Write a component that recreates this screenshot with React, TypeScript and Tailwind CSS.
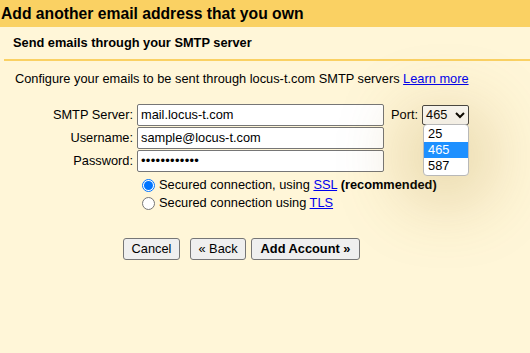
const fontStack = "font-['Liberation_Sans',Arial,sans-serif]";

function Field({ label, value, password }: { label: string; value: string; password?: boolean }) {
  return (
    <div className="flex h-[23px] items-center">
      <label className="w-[134px] pr-[1px] text-right">{label}</label>
      <div className="ml-[3px] flex h-[22px] w-[247px] items-center rounded-[2px] border border-[#767676] bg-white px-[3px]">
        {password ? <span className="text-[13px] tracking-[0.3px]">{value}</span> : <span>{value}</span>}
      </div>
    </div>
  );
}

function Radio({ checked }: { checked?: boolean }) {
  return (
    <span
      className={`flex h-[13px] w-[13px] items-center justify-center rounded-full border ${checked ? "border-[#0075ff]" : "border-[#767676]"} bg-white`}
    >
      {checked && <span className="h-[9px] w-[9px] rounded-full bg-[#0075ff]" />}
    </span>
  );
}

function Btn({ children, bold, w }: { children: React.ReactNode; bold?: boolean; w: string }) {
  return (
    <button
      className={`flex h-[22px] ${w} items-center justify-center rounded-[3px] border border-[#767676] bg-[#efefef] text-[12.8px] text-black ${bold ? "font-bold" : ""}`}
    >
      {children}
    </button>
  );
}

export default function App() {
  return (
    <div className={`h-[353px] w-[530px] overflow-hidden bg-[#fff6d8] text-[12.8px] text-black ${fontStack}`}>
      <div className="flex h-[27px] items-center bg-[#fad163] pl-[1px] text-[15.7px] font-bold">
        Add another email address that you own
      </div>
      <div className="flex h-[32px] items-center pl-[13px] font-bold">
        Send emails through your SMTP server
      </div>
      <div className="ml-[4px] h-[2px] bg-[#fad163]" />

      <div className="pt-[10px]">
        <p className="pl-[15px] leading-[15px]">
          Configure your emails to be sent through locus-t.com SMTP servers{" "}
          <a className="text-[#0000ee] underline" href="#">
            Learn more
          </a>
        </p>

        <div className="mt-[17px] flex">
          <div className="flex flex-col">
            <Field label="SMTP Server:" value="mail.locus-t.com" />
            <Field label="Username:" value="sample@locus-t.com" />
            <Field label="Password:" value="••••••••••••" password />
          </div>
          <div className="ml-[7px] flex h-[23px] items-center">
            <span>Port:</span>
            <div className="relative ml-[4px]">
              <div className="flex h-[20px] w-[47px] items-center justify-between rounded-[2px] border border-[#444] bg-white pl-[3px] pr-[3px]">
                <span>465</span>
                <svg width="10" height="8" viewBox="0 0 10 8">
                  <path d="M1 2l4 4 4-4" fill="none" stroke="#000" strokeWidth="2" />
                </svg>
              </div>
              <div className="absolute left-[1px] top-[19px] z-10 w-[46px] overflow-hidden rounded-[4px] border border-[#b8b8b8] bg-white py-[1px] shadow-[0_6px_70px_16px_rgba(150,110,20,0.28)]">
                <div className="h-[16px] pl-[4px] leading-[16px]">25</div>
                <div className="h-[16px] bg-[#1e90ff] pl-[4px] leading-[16px] text-white">465</div>
                <div className="h-[16px] pl-[4px] leading-[16px]">587</div>
              </div>
            </div>
          </div>
        </div>

        <div className="ml-[142px] mt-[4px] flex flex-col">
          <div className="flex h-[18px] items-center">
            <Radio checked />
            <span className="ml-[4px]">
              Secured connection, using{" "}
              <a className="text-[#0000ee] underline" href="#">
                SSL
              </a>{" "}
              <b>(recommended)</b>
            </span>
          </div>
          <div className="flex h-[18px] items-center">
            <Radio />
            <span className="ml-[4px]">
              Secured connection using{" "}
              <a className="text-[#0000ee] underline" href="#">
                TLS
              </a>
            </span>
          </div>
        </div>

        <div className="ml-[123px] mt-[26px] flex">
          <Btn w="w-[57px]">Cancel</Btn>
          <div className="ml-[10px]">
            <Btn w="w-[56px]">« Back</Btn>
          </div>
          <div className="ml-[5px]">
            <Btn w="w-[109px]" bold>
              Add Account »
            </Btn>
          </div>
        </div>
      </div>
    </div>
  );
}
